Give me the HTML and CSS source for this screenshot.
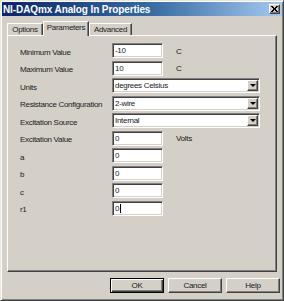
FILE: index.html
```html
<!DOCTYPE html>
<html lang="en">
<head>
  <meta charset="UTF-8">
  <title>NI-DAQmx Analog In Properties</title>
  <link rel="stylesheet" href="styles.css">
</head>
<body>
  <div class="window">
    <!-- Title bar -->
    <div class="titlebar">
      <span class="title">NI-DAQmx Analog In Properties</span>
      <span class="close">
        <svg width="7" height="6" viewBox="0 0 7 6">
          <path d="M0 0 L6 6 M1 0 L7 6 M6 0 L0 6 M7 0 L1 6" stroke="#000" stroke-width="1"/>
        </svg>
      </span>
    </div>

    <!-- Tabs -->
    <div class="tabs">
      <div class="tab tab-options">Options</div>
      <div class="tab tab-params active">Parameters</div>
      <div class="tab tab-adv">Advanced</div>
    </div>

    <!-- Parameters panel -->
    <div class="panel">
      <div class="row">
        <span class="label">Minimum Value</span>
        <div class="field">-10</div>
        <span class="unit">C</span>
      </div>
      <div class="row">
        <span class="label">Maximum Value</span>
        <div class="field">10</div>
        <span class="unit">C</span>
      </div>
      <div class="row">
        <span class="label">Units</span>
        <div class="combo">degrees Celsius<span class="drop"><i></i></span></div>
      </div>
      <div class="row">
        <span class="label">Resistance Configuration</span>
        <div class="combo">2-wire<span class="drop"><i></i></span></div>
      </div>
      <div class="row">
        <span class="label">Excitation Source</span>
        <div class="combo">Internal<span class="drop"><i></i></span></div>
      </div>
      <div class="row">
        <span class="label">Excitation Value</span>
        <div class="field">0</div>
        <span class="unit">Volts</span>
      </div>
      <div class="row">
        <span class="label">a</span>
        <div class="field">0</div>
      </div>
      <div class="row">
        <span class="label">b</span>
        <div class="field">0</div>
      </div>
      <div class="row">
        <span class="label">c</span>
        <div class="field">0</div>
      </div>
      <div class="row">
        <span class="label">r1</span>
        <div class="field">0<span class="caret"></span></div>
      </div>
    </div>

    <!-- Dialog buttons -->
    <div class="buttons">
      <div class="btn default">OK</div>
      <div class="btn">Cancel</div>
      <div class="btn">Help</div>
    </div>
  </div>
</body>
</html>
```

FILE: styles.css
```css
/* Global Styles */
* {
  margin: 0;
  padding: 0;
  box-sizing: border-box;
}

body {
  background-color: #d4d0c8;
  font-family: 'Liberation Sans', Arial, sans-serif;
  font-size: 8px;
  letter-spacing: -0.3px;
  color: #1a1a1a;
}

/* Window frame */
.window {
  width: 284px;
  height: 301px;
  padding: 1px;
  background-color: #d4d0c8;
  border: 1px solid;
  border-color: #e8e6e0 #404040 #404040 #e8e6e0;
  box-shadow: inset 1px 1px 0 #fff, inset -1px -1px 0 #808080;
}

/* Title bar */
.titlebar {
  height: 14px;
  display: flex;
  align-items: center;
  justify-content: space-between;
  padding: 0 2px 0 1px;
  background: linear-gradient(90deg, #0a246a 0%, #3a6ea5 55%, #a6caf0 100%);
}

.title {
  color: #fff;
  font-weight: bold;
  font-size: 10px;
  letter-spacing: -0.1px;
}

.close {
  width: 11px;
  height: 10px;
  display: flex;
  align-items: center;
  justify-content: center;
  background-color: #d4d0c8;
  border: 1px solid;
  border-color: #fff #404040 #404040 #fff;
  box-shadow: inset -1px -1px 0 #808080;
}

/* Tabs */
.tabs {
  display: flex;
  align-items: flex-end;
  height: 19px;
  margin-left: 5px;
}

.tab {
  height: 12px;
  padding-top: 1px;
  text-align: center;
  border: 1px solid;
  border-bottom: none;
  border-color: #fff #404040 #404040 #fff;
  box-shadow: inset -1px 0 0 #808080;
}

.tab-options {
  width: 36px;
}

.tab-params {
  width: 46px;
}

.tab-adv {
  width: 43px;
}

.tab.active {
  height: 15px;
  padding-top: 1px;
  margin-bottom: -1px;
  background-color: #d4d0c8;
  position: relative;
  z-index: 1;
}

/* Panel */
.panel {
  width: 270px;
  height: 237px;
  margin-left: 5px;
  padding: 7px 0 0 12px;
  display: flex;
  flex-direction: column;
  gap: 2.5px;
  border: 1px solid;
  border-color: #fff #404040 #404040 #fff;
  box-shadow: inset -1px -1px 0 #808080;
}

.row {
  display: flex;
  align-items: center;
  height: 15px;
}

.label {
  width: 92px;
  padding-top: 3px;
}

.unit {
  margin-left: 13px;
  padding-top: 1px;
}

.field,
.combo {
  height: 15px;
  padding: 2px 0 0 2px;
  background-color: #fff;
  border: 1px solid;
  border-color: #808080 #fff #fff #808080;
  box-shadow: inset 1px 1px 0 #404040, inset -1px -1px 0 #d4d0c8;
  display: flex;
  align-items: flex-start;
}

.field {
  width: 51px;
}

.combo {
  width: 148px;
  position: relative;
}

.drop {
  position: absolute;
  right: 1px;
  top: 1px;
  width: 11px;
  height: 11px;
  background-color: #d4d0c8;
  border: 1px solid;
  border-color: #fff #404040 #404040 #fff;
  box-shadow: inset -1px -1px 0 #808080;
  display: flex;
  align-items: center;
  justify-content: center;
}

.drop i {
  width: 0;
  height: 0;
  border-left: 3px solid transparent;
  border-right: 3px solid transparent;
  border-top: 3px solid #000;
}

.caret {
  width: 1px;
  height: 9px;
  margin-left: 1px;
  background-color: #000;
}

/* Dialog buttons */
.buttons {
  display: flex;
  justify-content: flex-end;
  gap: 4px;
  margin-top: 6px;
  padding-right: 2px;
}

.btn {
  width: 54px;
  height: 15px;
  display: flex;
  align-items: center;
  justify-content: center;
  border: 1px solid;
  border-color: #fff #404040 #404040 #fff;
  box-shadow: inset -1px -1px 0 #808080;
}

.btn.default {
  border-color: #000;
  box-shadow: inset 1px 1px 0 #fff, inset -1px -1px 0 #404040, inset -2px -2px 0 #808080;
}
```
